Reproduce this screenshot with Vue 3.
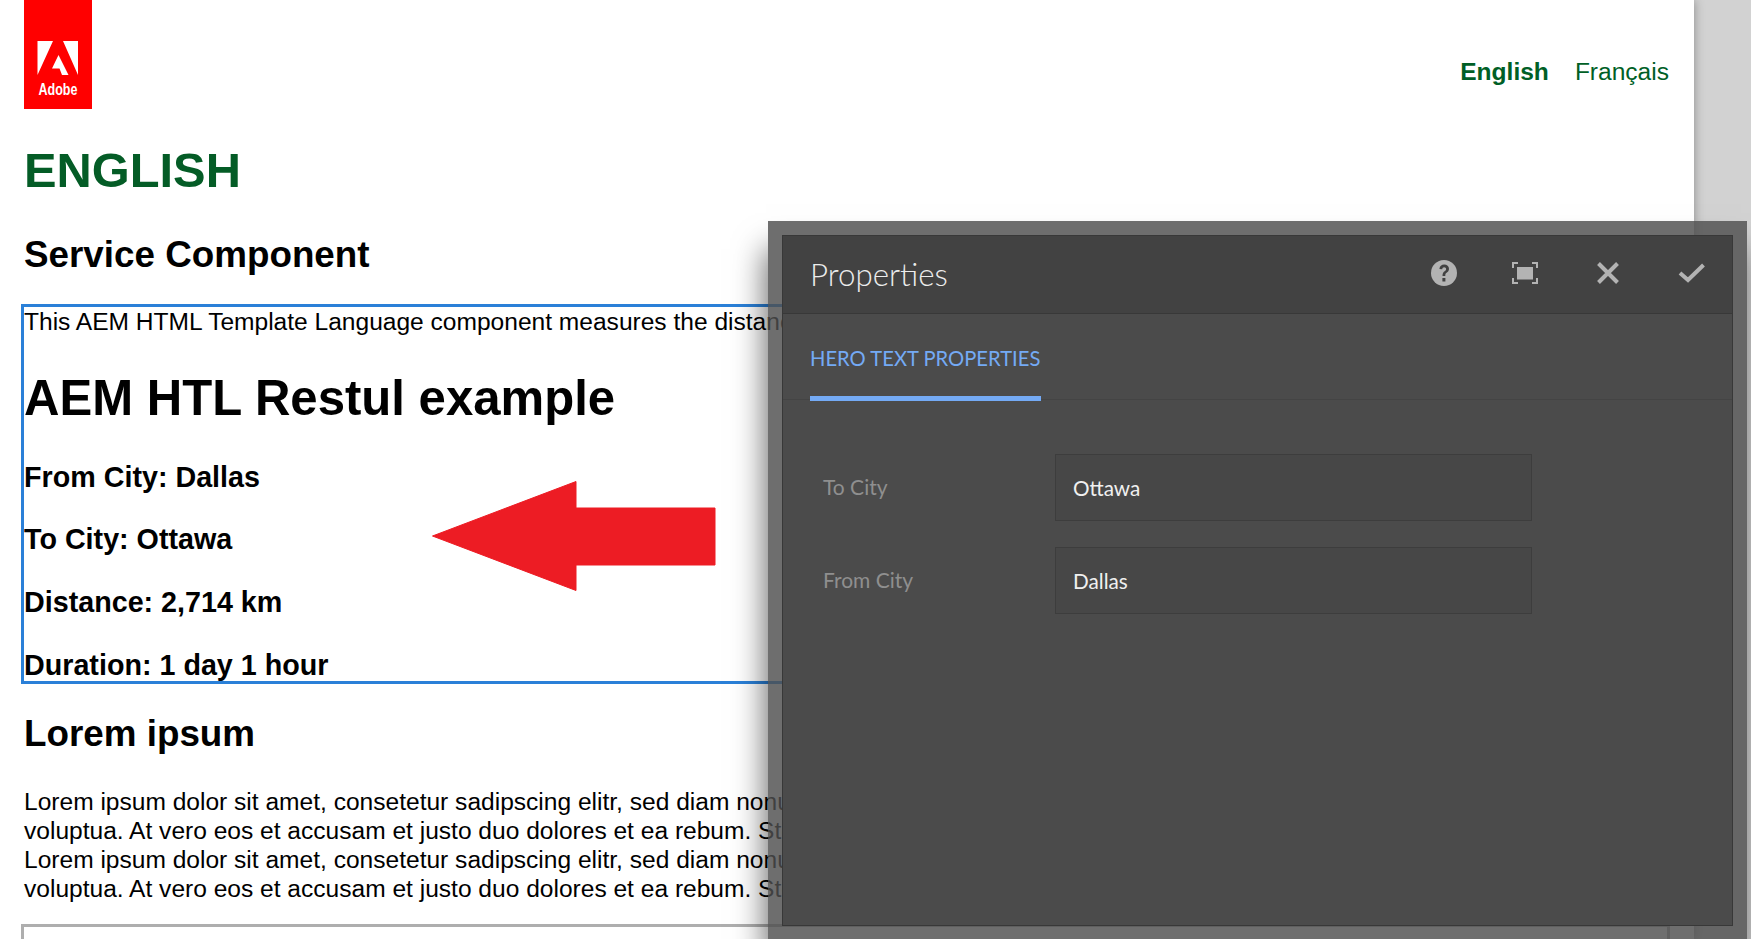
<template>
  <div class="screen">
    <main class="page">
      <header class="top">
        <div class="logo">
          <svg width="68" height="109" viewBox="0 0 68 109">
            <rect width="68" height="109" fill="#f00" />
            <path d="M13.5 41H29L13.5 75Z M39 41H54V75Z M34.5 55L44.5 75H38L35.5 68.5H28Z" fill="#fff" />
            <text x="34" y="95" class="logo-text" text-anchor="middle" textLength="39" lengthAdjust="spacingAndGlyphs">Adobe</text>
          </svg>
        </div>
        <nav class="lang">
          <a class="active">English</a>
          <a>Français</a>
        </nav>
      </header>
      <h1 class="title">ENGLISH</h1>
      <h2 class="section">Service Component</h2>
      <section class="component">
        <p class="intro">This AEM HTML Template Language component measures the distance between two cities</p>
        <h2 class="big">AEM HTL Restul example</h2>
        <h3 v-for="r in results" :key="r" class="result">{{ r }}</h3>
      </section>
      <h2 class="section lorem-h">Lorem ipsum</h2>
      <p class="lorem">Lorem ipsum dolor sit amet, consetetur sadipscing elitr, sed diam nonumy eirmod tempor<br />voluptua. At vero eos et accusam et justo duo dolores et ea rebum. Stet clita kasd<br />Lorem ipsum dolor sit amet, consetetur sadipscing elitr, sed diam nonumy eirmod tempor<br />voluptua. At vero eos et accusam et justo duo dolores et ea rebum. Stet clita kasd</p>
      <div class="next-box"></div>
    </main>

    <svg class="arrow" width="284" height="110" viewBox="0 0 284 110">
      <path d="M0.500 55L144 0.500V27H283V84H144V109.500Z" fill="#ed1c24" stroke="#ed1c24" stroke-width="1" stroke-linejoin="round" />
    </svg>

    <div class="modal">
      <div class="dialog">
        <div class="dialog-head">
          <span class="dialog-title">Properties</span>
          <div class="icons">
            <svg class="icon help" width="26" height="26" viewBox="0 0 26 26">
              <circle cx="13" cy="13" r="13" fill="#b3b3b3" />
              <path d="M8.400 9C8.600 6 10.600 4.500 13.200 4.500C16 4.500 18 6.200 18 8.800C18 10.800 17 11.800 15.600 12.800C14.500 13.600 14.300 14.200 14.300 16H11.500C11.500 13.500 12.200 12.300 13.600 11.300C14.700 10.500 15.100 10 15.100 9C15.100 7.900 14.300 7.200 13.200 7.200C12 7.200 11.300 7.900 11.200 9.200Z M11.400 18H14.400V21.500H11.400Z" fill="#424242" />
            </svg>
            <svg class="icon screen-icon" width="26" height="22" viewBox="0 0 26 22">
              <rect x="5" y="5" width="16" height="12.500" fill="#b3b3b3" />
              <path d="M1 6V1H6M20 1H25V6M25 16V21H20M6 21H1V16" fill="none" stroke="#b3b3b3" stroke-width="2" />
            </svg>
            <svg class="icon close" width="24" height="24" viewBox="0 0 24 24">
              <path d="M2.500 2.500L21.500 21.500M21.500 2.500L2.500 21.500" fill="none" stroke="#b3b3b3" stroke-width="4" />
            </svg>
            <svg class="icon check" width="27" height="20" viewBox="0 0 27 20">
              <path d="M2 10L10 17L25.500 2" fill="none" stroke="#b3b3b3" stroke-width="4" />
            </svg>
          </div>
        </div>
        <div class="tabs">
          <span class="tab">HERO TEXT PROPERTIES</span>
        </div>
        <div class="form">
          <div v-for="f in fields" :key="f.label" class="field">
            <label>{{ f.label }}</label>
            <div class="input">{{ f.value }}</div>
          </div>
        </div>
      </div>
    </div>
  </div>
</template>

<script setup>
const results = [
  'From City: Dallas',
  'To City: Ottawa',
  'Distance: 2,714 km',
  'Duration: 1 day 1 hour',
]
const fields = [
  { label: 'To City', value: 'Ottawa' },
  { label: 'From City', value: 'Dallas' },
]
</script>

<style>
html, body { margin: 0; overflow: hidden; }
</style>

<style scoped>
.screen {
  position: relative;
  width: 1751px;
  height: 939px;
  overflow: hidden;
  background: #d2d2d2;
  font-family: "Liberation Sans", Arial, sans-serif;
  color: #000;
}
.page {
  width: 1694px;
  height: 939px;
  overflow: hidden;
  background: #fff;
  box-shadow: 0 0 10px rgba(0, 0, 0, 0.35);
  box-sizing: border-box;
  padding-left: 24px;
}
.top {
  display: flex;
  justify-content: space-between;
  height: 109px;
  padding-right: 25px;
}
.logo { width: 68px; height: 109px; }
.logo svg { display: block; }
.logo-text { font: bold 17px "Liberation Sans", sans-serif; fill: #fff; }
.lang {
  display: flex;
  gap: 26px;
  padding-top: 58px;
  font-size: 24.550px;
  line-height: 28px;
  color: #005f26;
}
.active { font-weight: bold; }
.title {
  margin: 33px 0 0;
  font-size: 48.800px;
  line-height: 56px;
  font-weight: bold;
  color: #045c26;
}
.section {
  margin: 0;
  font-size: 36.800px;
  line-height: 42px;
  font-weight: bold;
}
.title + .section { margin-top: 36px; }
.component {
  margin: 28px 0 0 -3px;
  width: 1647px;
  height: 380px;
  box-sizing: border-box;
  border: 3px solid #2a80d8;
  overflow: hidden;
}
.intro {
  margin: 0;
  font-size: 24.550px;
  line-height: 29px;
  white-space: nowrap;
}
.big {
  margin: 34px 0 0;
  font-size: 49.100px;
  line-height: 56px;
  font-weight: bold;
}
.result {
  margin: 0;
  font-size: 28.700px;
  line-height: 33px;
  font-weight: bold;
}
.big + .result { margin-top: 34.500px; }
.result + .result { margin-top: 29.700px; }
.section.lorem-h { margin-top: 29px; }
.lorem {
  margin: 31.600px 0 0;
  font-size: 24.550px;
  line-height: 29px;
  white-space: nowrap;
}
.next-box {
  margin: 21.500px 0 0 -3px;
  width: 1649px;
  height: 60px;
  box-sizing: border-box;
  border: 3px solid #aeaeae;
}
.arrow {
  position: absolute;
  left: 431.500px;
  top: 481px;
}
.modal {
  position: absolute;
  left: 768px;
  top: 221px;
  width: 979px;
  height: 718px;
  box-sizing: border-box;
  padding: 14px 14px 0;
  background: rgba(78, 78, 78, 0.82);
  box-shadow: -4px 26px 30px -2px rgba(0, 0, 0, 0.6);
}
.dialog {
  height: 691px;
  box-sizing: border-box;
  display: flex;
  flex-direction: column;
  background: #4b4b4b;
  border: 1px solid #383838;
  font-family: Lato, "Open Sans", sans-serif;
}
.dialog-head {
  display: flex;
  align-items: center;
  justify-content: space-between;
  height: 78px;
  flex: none;
  box-sizing: border-box;
  padding: 0 27px 0 27px;
  background: #424242;
  border-bottom: 1px solid #383838;
}
.dialog-title {
  font-size: 31.300px;
  font-weight: 300;
  color: #ececec;
  margin-top: -2px;
}
.icons {
  display: flex;
  align-items: center;
}
.icon { display: block; flex: none; margin-top: -4px; }
.screen-icon { margin-left: 54px; }
.close { margin-left: 58px; }
.check { margin-left: 58.500px; }
.help { margin-right: 0.500px; }
.tabs {
  height: 86px;
  flex: none;
  box-sizing: border-box;
  padding-left: 27px;
  border-bottom: 1px solid #444;
}
.tab {
  display: inline-block;
  box-sizing: border-box;
  width: 231px;
  height: 87px;
  padding-top: 32px;
  font-size: 20.200px;
  line-height: 24px;
  white-space: nowrap;
  color: #74aaf5;
  border-bottom: 5px solid #74aaf5;
}
.form {
  display: flex;
  flex-direction: column;
  gap: 26px;
  padding: 54px 0 0 40px;
}
.field {
  display: flex;
  align-items: center;
}
.field label {
  width: 232px;
  font-size: 21px;
  color: #8f8f8f;
  padding-bottom: 2px;
}
.input {
  width: 477px;
  height: 67px;
  box-sizing: border-box;
  padding-left: 17px;
  display: flex;
  align-items: center;
  font-size: 20.700px;
  background: #474747;
  border: 1px solid #3d3d3d;
  color: #f0f0f0;
}
</style>
